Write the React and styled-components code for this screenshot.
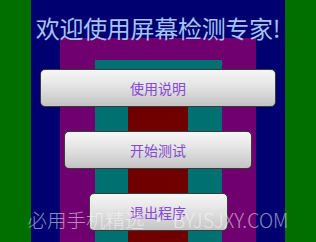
import React from 'react';
import styled, { createGlobalStyle } from 'styled-components';

const GlobalStyle = createGlobalStyle`
  html, body {
    margin: 0;
    padding: 0;
    background: #000;
  }
  body {
    font-family: "Noto Sans CJK SC", "Noto Sans", sans-serif;
  }
`;

const Screen = styled.div`
  width: 316px;
  height: 242px;
  display: grid;
  overflow: hidden;
  position: relative;
`;

const Band = styled.div`
  grid-area: 1 / 1;
  display: flex;
  justify-content: center;
  background: ${(p) => p.color};
  padding: ${(p) => p.pad};
  box-sizing: border-box;
  height: 100%;
  width: 100%;
`;

const Layer = styled.div`
  grid-area: 1 / 1;
  display: flex;
  flex-direction: column;
  align-items: center;
  position: relative;
  z-index: 1;
`;

const Title = styled.h1`
  margin: 13px 0 0;
  font-size: 24px;
  font-weight: 400;
  line-height: 30px;
  height: 30px;
  color: #a6c4f2;
  white-space: nowrap;
  letter-spacing: -0.3px;
`;

const Menu = styled.div`
  margin-top: 26px;
  display: flex;
  flex-direction: column;
  align-items: center;
  gap: 24px;
`;

const Button = styled.button`
  width: ${(p) => p.w}px;
  height: 38px;
  box-sizing: border-box;
  border: 1px solid #3a3a3a;
  border-radius: 5px;
  background: linear-gradient(#f6f6f6 0%, #e6e6e6 40%, #c4c4c4 100%);
  color: #8748d4;
  font-family: "Noto Sans CJK SC", sans-serif;
  font-size: 14px;
  line-height: 20px;
  padding: 0;
  cursor: pointer;
`;

const Watermark = styled.div`
  position: absolute;
  left: 0;
  right: 0;
  top: 205px;
  text-align: center;
  font-family: "Noto Sans CJK SC", "Noto Sans", sans-serif;
  font-size: 19.5px;
  font-weight: 300;
  color: rgba(255, 255, 255, 0.55);
  white-space: nowrap;
  pointer-events: none;
  z-index: 2;
`;

export default function App() {
  return (
    <>
      <GlobalStyle />
      <Screen>
        <Band color="#006f00" pad="0 31px">
          <Band color="#000070" pad="38px 29px 0">
            <Band color="#700070" pad="22px 34px 0 35px">
              <Band color="#007070" pad="22px 34px 0 33px">
                <Band color="#700000" pad="0" />
              </Band>
            </Band>
          </Band>
        </Band>
        <Layer>
          <Title>欢迎使用屏幕检测专家!</Title>
          <Menu>
            <Button w={236}>使用说明</Button>
            <Button w={188}>开始测试</Button>
            <Button w={139}>退出程序</Button>
          </Menu>
        </Layer>
        <Watermark>必用手机精选 • BYJSJXY.COM</Watermark>
      </Screen>
    </>
  );
}
